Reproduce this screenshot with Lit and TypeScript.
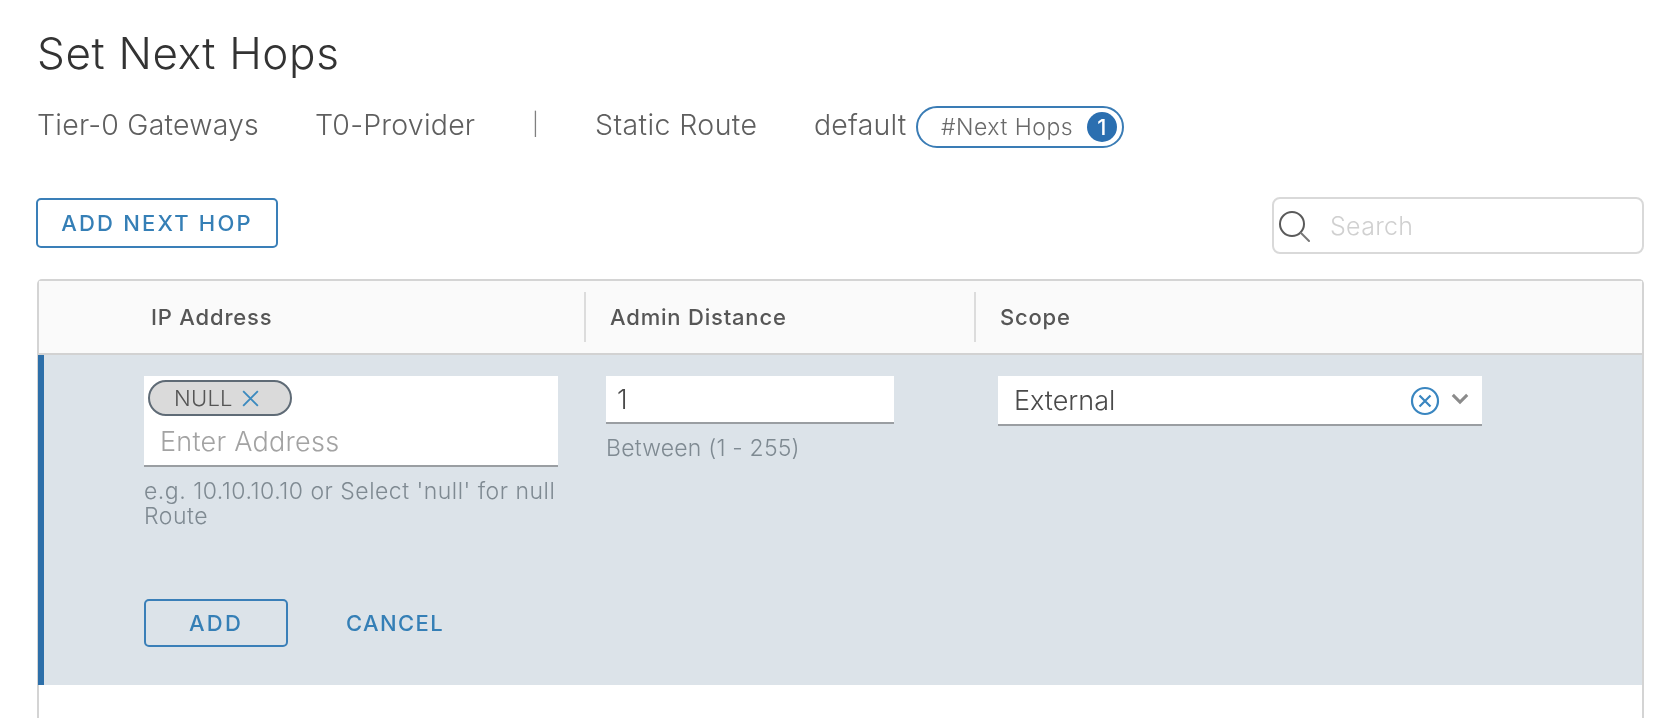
import { LitElement, html, css } from "lit";
import { customElement } from "lit/decorators.js";

@customElement("app-root")
export class AppRoot extends LitElement {
  static styles = css`
    :host { display: block; height: 718px; overflow: hidden; background: #fff; font-family: "Inter", "Liberation Sans", sans-serif; box-sizing: border-box; padding: 0 30px 0 37px; color: #565656; filter: blur(0.45px); }
    * { box-sizing: border-box; }
    h1 { margin: 0; padding-top: 29px; height: 102px; font-size: 44px; line-height: 48px; font-weight: 300; color: #333; letter-spacing: 0.65px; }
    .crumbs { display: flex; align-items: center; height: 44px; font-size: 28.5px; font-weight: 300; color: #5f5f5f; letter-spacing: 0.2px; }
    .crumbs span.c1 { width: 278px; }
    .crumbs span.c2 { width: 217px; }
    .crumbs span.c3 { width: 63px; font-size: 22px; color: #808080; }
    .crumbs span.c4 { width: 219px; letter-spacing: 0.4px; }
    .crumbs span.c5 { width: 102px; }
    .pill { width: 208px; height: 42px; margin-top: 5px; border: 2px solid #3a7cb5; border-radius: 21px; display: flex; align-items: center; justify-content: space-between; padding: 0 5px 0 23px; font-size: 23px; font-weight: 300; color: #6a6a6a; letter-spacing: 0.5px; }
    .badge { width: 30px; height: 30px; border-radius: 50%; background: #2b6fb0; color: #fff; display: flex; align-items: center; justify-content: center; font-size: 22px; font-weight: 500; }
    .toolbar { display: flex; justify-content: space-between; align-items: flex-start; margin-top: 51px; height: 82px; }
    .btn { display: flex; align-items: center; justify-content: center; border: 2px solid #3a7fb8; border-radius: 5px; color: #357fb6; font-size: 22px; font-weight: 500; letter-spacing: 2.2px; background: transparent; }
    .add-hop { width: 242px; height: 50px; margin-top: 1px; margin-left: -1px; }
    .search { width: 372px; height: 57px; border: 2px solid #d9d9d9; border-radius: 8px; display: flex; align-items: center; padding-left: 4px; gap: 20px; font-size: 25px; font-weight: 300; color: #d0d0d0; letter-spacing: 0.3px; }
    .search svg { width: 32px; height: 34px; margin-top: 3px; }
    .table { border: 2px solid #d4d4d4; border-bottom: 0; border-radius: 5px 5px 0 0; height: 460px; }
    .cols { display: grid; grid-template-columns: 107px 438px 390px 1fr; }
    .head { height: 74px; background: #fafafa; border-bottom: 2px solid #d2d2d2; align-items: center; }
    .head div { height: 50px; display: flex; align-items: center; font-size: 22px; font-weight: 500; color: #565656; letter-spacing: 0.8px; }
    .head .h1 { padding-left: 5px; }
    .head .h2, .head .h3 { border-left: 2px solid #dcdcdc; padding-left: 24px; }
    .row { height: 330px; background: #dce3e9; border-left: 6px solid #2d6fa9; margin-left: -1px; display: grid; grid-template-columns: 100px 462px 392px 484px; padding-top: 21px; grid-template-rows: 1fr auto; }
    .input { background: #fff; border-bottom: 2px solid #9a9ea2; font-size: 27px; font-weight: 300; color: #4a4a4a; }
    .cell1 { grid-column: 2; }
    .cell2 { grid-column: 3; }
    .cell3 { grid-column: 4; }
    .cell1 .input { width: 414px; height: 91px; padding: 4px; }
    .chip { width: 144px; height: 36px; background: #dadada; border: 2px solid #5f6b76; border-radius: 18px; display: flex; align-items: center; padding-left: 24px; gap: 7px; font-size: 22px; font-weight: 300; color: #555; letter-spacing: 0.25px; }
    .chip svg { width: 21px; height: 21px; }
    .ph { padding: 8px 0 0 12px; font-size: 27px; font-weight: 300; color: #a3a3a3; line-height: 36px; letter-spacing: 0.25px; }
    .help { margin-top: 12px; font-size: 23px; line-height: 24.5px; color: #7f8a92; font-weight: 300; letter-spacing: 0.2px; }
    .help.wide { letter-spacing: 0.5px; }
    .cell2 .input { width: 288px; height: 48px; padding-left: 11px; display: flex; align-items: center; }
    .cell3 .input { width: 484px; height: 50px; padding-left: 16px; display: flex; align-items: center; justify-content: space-between; padding-right: 13px; }
    .icons { display: flex; align-items: center; gap: 11px; }
    .icons .clear { width: 30px; height: 30px; margin-top: 2px; }
    .icons .chev { width: 18px; height: 13px; margin-top: -4px; }
    .actions { grid-column: 2 / 5; display: flex; align-items: center; padding-bottom: 39px; height: 85px; }
    .add { width: 144px; height: 48px; }
    .cancel { margin-left: 58px; color: #357fb6; font-size: 22px; font-weight: 500; letter-spacing: 1.4px; }
  `;

  render() {
    return html`
      <h1>Set Next Hops</h1>
      <div class="crumbs">
        <span class="c1">Tier-0 Gateways</span>
        <span class="c2">T0-Provider</span>
        <span class="c3">|</span>
        <span class="c4">Static Route</span>
        <span class="c5">default</span>
        <div class="pill"><span>#Next Hops</span><div class="badge">1</div></div>
      </div>
      <div class="toolbar">
        <div class="btn add-hop">ADD NEXT HOP</div>
        <div class="search">
          <svg viewBox="0 0 32 34" fill="none" stroke-linecap="round">
            <circle cx="14" cy="14" r="12" stroke="#5a5a5a" stroke-width="2"/>
            <path d="M23 23 L31 31" stroke="#777" stroke-width="2"/>
          </svg>
          <span>Search</span>
        </div>
      </div>
      <div class="table">
        <div class="cols head">
          <span></span>
          <div class="h1">IP Address</div>
          <div class="h2">Admin Distance</div>
          <div class="h3">Scope</div>
        </div>
        <div class="row">
          <div class="cell1">
            <div class="input">
              <div class="chip">NULL
                <svg viewBox="0 0 20 20" fill="none" stroke="#3b8abf" stroke-width="1.8"><path d="M3 3 L17 17 M17 3 L3 17"/></svg>
              </div>
              <div class="ph">Enter Address</div>
            </div>
            <div class="help wide">e.g. 10.10.10.10 or Select 'null' for null Route</div>
          </div>
          <div class="cell2">
            <div class="input">1</div>
            <div class="help">Between (1 - 255)</div>
          </div>
          <div class="cell3">
            <div class="input">External
              <div class="icons">
                <svg class="clear" viewBox="0 0 30 30" fill="none" stroke="#3a86c0" stroke-width="2.2"><circle cx="15" cy="15" r="13"/><path d="M9.5 9.5 L20.5 20.5 M20.5 9.5 L9.5 20.5"/></svg>
                <svg class="chev" viewBox="0 0 20 14" fill="none" stroke="#8b8b8b" stroke-width="3.4"><path d="M2 3 L10 11 L18 3"/></svg>
              </div>
            </div>
          </div>
          <div class="actions">
            <div class="btn add">ADD</div>
            <div class="cancel">CANCEL</div>
          </div>
        </div>
      </div>
    `;
  }
}
